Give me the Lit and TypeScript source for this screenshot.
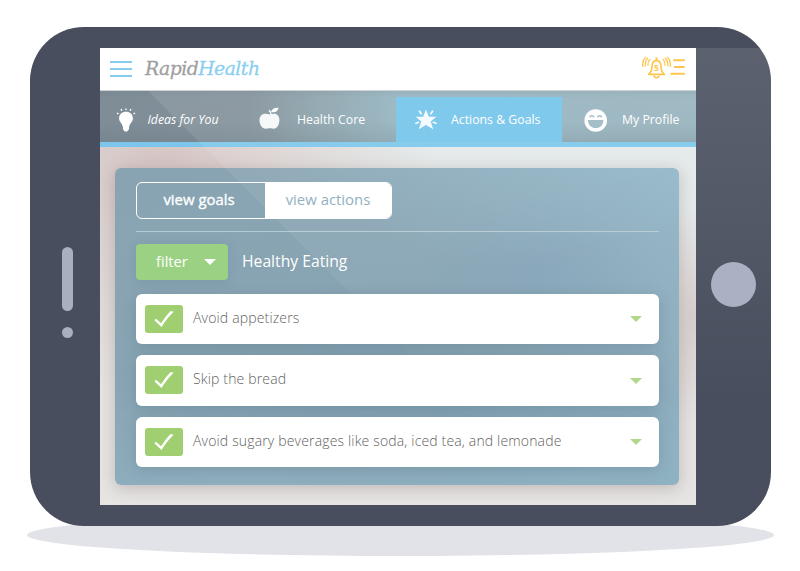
import { LitElement, html, css, svg } from "lit";
import { customElement } from "lit/decorators.js";

const bulb = svg`<svg class="ico bulb" width="20" height="24" viewBox="0 0 20 24">
  <path fill="#fff" d="M10 3.700c-3.900 0-6.900 2.700-6.900 6.500 0 3.900 3.100 5 3.700 8.300h6.400c.6-3.300 3.700-4.400 3.700-8.300 0-3.800-3-6.500-6.900-6.500z"/>
  <path fill="#fff" d="M6.900 18h6.200v3l-.9 1.200-.9 1.300H8.700l-.9-1.300-.9-1.200z"/>
  <path fill="none" stroke="#fff" stroke-width="1.400" d="M10 .4v1.600M5 1.200l.9 1.500M15 1.200l-.9 1.500M1 5.100l1.500.8M19 5.100l-1.500.8"/></svg>`;

const apple = svg`<svg class="ico apple" width="22" height="24" viewBox="0 0 22 24">
  <path fill="#f5f7f8" d="M10.600 7.600C9.400 7 7.900 6.700 6.300 6.700 2.900 6.700.5 9.200.5 13c0 4.500 2.400 8.700 6.400 8.700 1.500 0 2.400-.4 3.700-.4s2.200.4 3.700.4c4 0 6.100-4.200 6.100-8.700 0-3.800-2.100-6.300-5.500-6.300-1.600 0-3.100.3-4.300.9z"/>
  <path fill="none" stroke="#f5f7f8" stroke-width="1.300" d="M11.900 8C12 5.500 11.500 4 9.800 3.300"/>
  <path fill="#fff" d="M12.200 5C12.600 2.200 15 .7 19.500.7c-.4 3.100-2.800 5.300-7.300 4.300z"/></svg>`;

const star = svg`<svg class="ico star" width="22" height="22" viewBox="0 0 22 22">
  <path fill="#f4fbff" d="M11 .4l2.900 7.300h7.400l-5.600 4.700 2.500 7.900L11 16l-7.200 4.300 2.500-7.900L.7 7.700h7.400z"/>
  <path fill="none" stroke="#f4fbff" stroke-width="1.700" stroke-linecap="round" d="M4.500 2.200l1.700 2.500M17.500 2.200l-1.700 2.500M1 14.300l2.600-1M21 14.300l-2.600-1"/></svg>`;

const smile = svg`<svg class="ico smile" width="24" height="24" viewBox="0 0 24 24">
  <circle cx="11.700" cy="12.500" r="11.300" fill="#fff"/>
  <path fill="#9db8c2" d="M4 12h15.400c0 4.900-3.200 8.100-7.700 8.100S4 16.900 4 12z"/>
  <path fill="none" stroke="#9db8c2" stroke-width="1.500" d="M5.700 9.300c.4-2.200 3.800-2.200 4.200 0M13.500 9.300c.4-2.200 3.800-2.200 4.200 0"/></svg>`;

const bell = svg`<svg width="44" height="24" viewBox="0 0 44 24" fill="none" stroke="#fdc54b">
  <path stroke-width="1.600" stroke-linejoin="round" d="M6.500 18.400c2.600-2 3.300-4 3.400-7.200.1-4.300 1.800-6.600 4.600-6.600s4.500 2.300 4.600 6.600c.1 3.200.8 5.200 3.400 7.200z"/>
  <path stroke-width="2" d="M14.500 1.500v2.800"/>
  <path stroke-width="1.500" d="M12 19.600c.3 2.700 4.700 2.700 5 0"/>
  <path stroke-width="1.200" d="M8.300 3C6.400 4.500 5.800 7 6 9.800M6 1.700C3.500 3.900 2.900 7 3.300 10.400M3.600.8C.8 3.600.2 7.300.8 11M20.700 3c1.900 1.500 2.500 4 2.300 6.800M23 1.700c2.500 2.200 3.100 5.300 2.700 8.700M25.400.8c2.800 2.800 3.400 6.500 2.800 10.200"/>
  <path stroke-width="2" d="M31.200 4.200h11.500M32 11h10.700M28.600 17.700h14.100"/>
  <text x="14.500" y="15.200" text-anchor="middle" font-family="Open Sans, sans-serif" font-weight="700" font-size="8.500" fill="#fdc54b" stroke="none">5</text></svg>`;

const check = svg`<svg width="22" height="18" viewBox="0 0 22 18">
  <path fill="#fff" d="M1.400 10.200l1.700-1.400 4.900 4.500C10.800 9 14.200 4.300 17.600.9l3 .9C16 6 12.300 11.500 8.400 17z"/></svg>`;

@customElement("app-root")
export class AppRoot extends LitElement {
  static styles = css`
    :host { display: block; width: 800px; height: 571px; background: #fff; overflow: hidden; position: relative; font-family: "Open Sans", "Noto Sans", sans-serif; }
    * { box-sizing: border-box; }
    svg { display: block; flex: none; }
    .shadow { position: absolute; left: 27px; top: 514px; width: 747px; height: 42px; border-radius: 50%; background: #e2e3e8; }
    .device { position: relative; margin-left: 30px; top: 26.500px; width: 741px; height: 499.500px; border-radius: 54px; background: #484e5d; overflow: hidden; display: grid; grid-template-columns: 70px 596px 75px; }
    .speaker { display: flex; flex-direction: column; align-items: center; padding: 220.500px 0 0 5px; gap: 16px; }
    .bar { width: 11px; height: 64px; border-radius: 6px; background: #a9afc0; }
    .dot { width: 11px; height: 11px; border-radius: 50%; background: #a9afc0; }
    .home { display: flex; justify-content: center; padding-top: 235px; position: relative; z-index: 2; }
    .button { width: 45px; height: 45px; border-radius: 50%; background: #abb1c2; }
    .screen { margin-top: 21.500px; height: 456.500px; display: flex; flex-direction: column; overflow: hidden;
      background: radial-gradient(ellipse 270px 230px at 60px 110px, #d6c6c4 0, rgba(214,198,196,0) 100%), radial-gradient(ellipse 50px 110px at 594px 270px, rgba(212,203,202,.9), rgba(212,203,202,0)), linear-gradient(180deg, #e3e8e8 35%, #e4e3e2 65%, #e6e5e4); }
    .header { height: 43px; background: #fff; border-bottom: 1px solid #d0d3d4; display: flex; align-items: center; padding: 0 10px; position: relative; z-index: 2; }
    .menu { width: 22px; height: 16px; display: flex; flex-direction: column; justify-content: space-between; margin-top: -1px; }
    .menu i { height: 2px; background: #85ccee; }
    .logo { font: italic 18.800px/30px "DejaVu Serif", serif; color: #a0a0a1; margin: -1px auto 0 13px; white-space: nowrap; letter-spacing: -0.520px; -webkit-text-stroke: 0.300px currentColor; }
    .logo b { font-weight: 400; color: #8acff0; }
    .bell { margin-top: -2px; }
    .nav { height: 56px; border-bottom: 5px solid #7cc6eb; display: flex; color: #fff; font-size: 12.300px; line-height: 20px; padding-top: 6px;
      background: linear-gradient(180deg, rgba(80,95,105,.1), rgba(80,95,105,0) 14%, rgba(80,95,105,0) 60%, rgba(80,95,105,.16)), linear-gradient(90deg, #7f8d97, #81909a 25%, #8ba2ab 37%, #93b3bf 50%, #96b2bd); }
    .tab { display: flex; align-items: center; height: 45px; white-space: nowrap; }
    .ideas { width: 153px; padding-left: 16px; gap: 11.500px; font-style: italic; }
    .core { width: 143px; padding-left: 5.500px; gap: 16.500px; }
    .active { width: 166px; padding-left: 19px; gap: 14px; background: #7fc9ed; position: relative; z-index: 2; }
    .profile { padding-left: 22px; gap: 14px; }
    .apple { margin-top: -2px; }
    .panel { margin: 20.500px 0 0 15px; width: 564px; height: 317px; border-radius: 6px; padding: 14px 20px 0 21px;
      box-shadow: 0 3px 16px rgba(90,70,70,.28);
      background: radial-gradient(ellipse 120px 70px at 425px 105px, rgba(125,158,185,.4), rgba(125,158,185,0)), radial-gradient(ellipse 300px 110px at 290px 220px, rgba(118,148,165,.5), rgba(118,148,165,0)), linear-gradient(205deg, rgba(146,184,202,.9), rgba(146,184,202,0) 35%), linear-gradient(165deg, #89a3b2 0, #88a5b4 45%, #8fafbf 75%, #8fb2c2 100%); }
    .toggle { width: 256px; height: 37px; border: 1.500px solid #fff; border-radius: 6px; display: flex; font-size: 15px; line-height: 33px; text-align: center; overflow: hidden; color: #fff; }
    .goals { width: 128px; padding-right: 4px; font-size: 14.900px; line-height: 32px; -webkit-text-stroke: 0.350px #fff; }
    .actions { flex: 1; background: #fff; color: #91b1c1; font-size: 14.900px; line-height: 32px; position: relative; z-index: 2; }
    .rule { height: 1.500px; background: #b4cad4; margin-top: 12px; }
    .bar2 { display: flex; align-items: center; gap: 14px; margin-top: 11.500px; color: #fff; font-size: 15.700px; line-height: 34px; }
    .bar2 > span { margin-top: -2px; }
    .filter { width: 92px; height: 36px; border-radius: 4px; background: #9bd183; display: flex; align-items: center; padding: 0 12px 0 20px; justify-content: space-between; font-size: 14.700px; position: relative; z-index: 2; box-shadow: 0 2px 10px rgba(80,110,140,.2); }
    .filter span { margin-top: -1px; }
    .caret { border: solid transparent; border-width: 5.500px 5.500px 0; border-top-color: currentColor; }
    .list { margin-top: 14px; display: flex; flex-direction: column; gap: 11px; }
    .row { height: 50.500px; background: #fff; border-radius: 6px; display: flex; align-items: center; padding: 0 17.500px 0 9px; color: #5f5f62; font-size: 14px; font-weight: 400; position: relative; z-index: 2; box-shadow: 0 3px 14px rgba(75,100,120,.28); }
    .check { width: 38px; height: 28px; border-radius: 3px; background: #a0cf71; display: flex; align-items: center; justify-content: center; }
    .label { margin: -2px auto 0 10px; line-height: 20px; white-space: nowrap; font-weight: 300; letter-spacing: 0.160px; }
    .row .caret { color: #b0d78a; border-width: 6px 6px 0; margin-top: 1px; }
    .filter .caret { border-width: 6px 6px 0; }
    .glare { position: absolute; left: 70px; top: 21.500px; width: 671px; height: 400px; pointer-events: none; z-index: 1;
      clip-path: polygon(5px 0, 100% 0, 100% 100%, 405px 100%);
      background: linear-gradient(180deg, rgba(255,255,255,.11), rgba(255,255,255,.06) 45%, rgba(255,255,255,0) 88%); }
  `;

  render() {
    const goals = ["Avoid appetizers", "Skip the bread", "Avoid sugary beverages like soda, iced tea, and lemonade"];
    return html`
      <div class="shadow"></div>
      <div class="device">
        <div class="speaker"><div class="bar"></div><div class="dot"></div></div>
        <div class="screen">
          <div class="header">
            <div class="menu"><i></i><i></i><i></i></div>
            <div class="logo">Rapid<b>Health</b></div>
            <div class="bell">${bell}</div>
          </div>
          <div class="nav">
            <div class="tab ideas">${bulb}<span>Ideas for You</span></div>
            <div class="tab core">${apple}<span>Health Core</span></div>
            <div class="tab active">${star}<span>Actions &amp; Goals</span></div>
            <div class="tab profile">${smile}<span>My Profile</span></div>
          </div>
          <div class="panel">
            <div class="toggle"><div class="goals">view goals</div><div class="actions">view actions</div></div>
            <div class="rule"></div>
            <div class="bar2">
              <div class="filter"><span>filter</span><div class="caret"></div></div>
              <span>Healthy Eating</span>
            </div>
            <div class="list">
              ${goals.map((g) => html`<div class="row"><div class="check">${check}</div><span class="label">${g}</span><div class="caret"></div></div>`)}
            </div>
          </div>
        </div>
        <div class="home"><div class="button"></div></div>
        <div class="glare"></div>
      </div>`;
  }
}
